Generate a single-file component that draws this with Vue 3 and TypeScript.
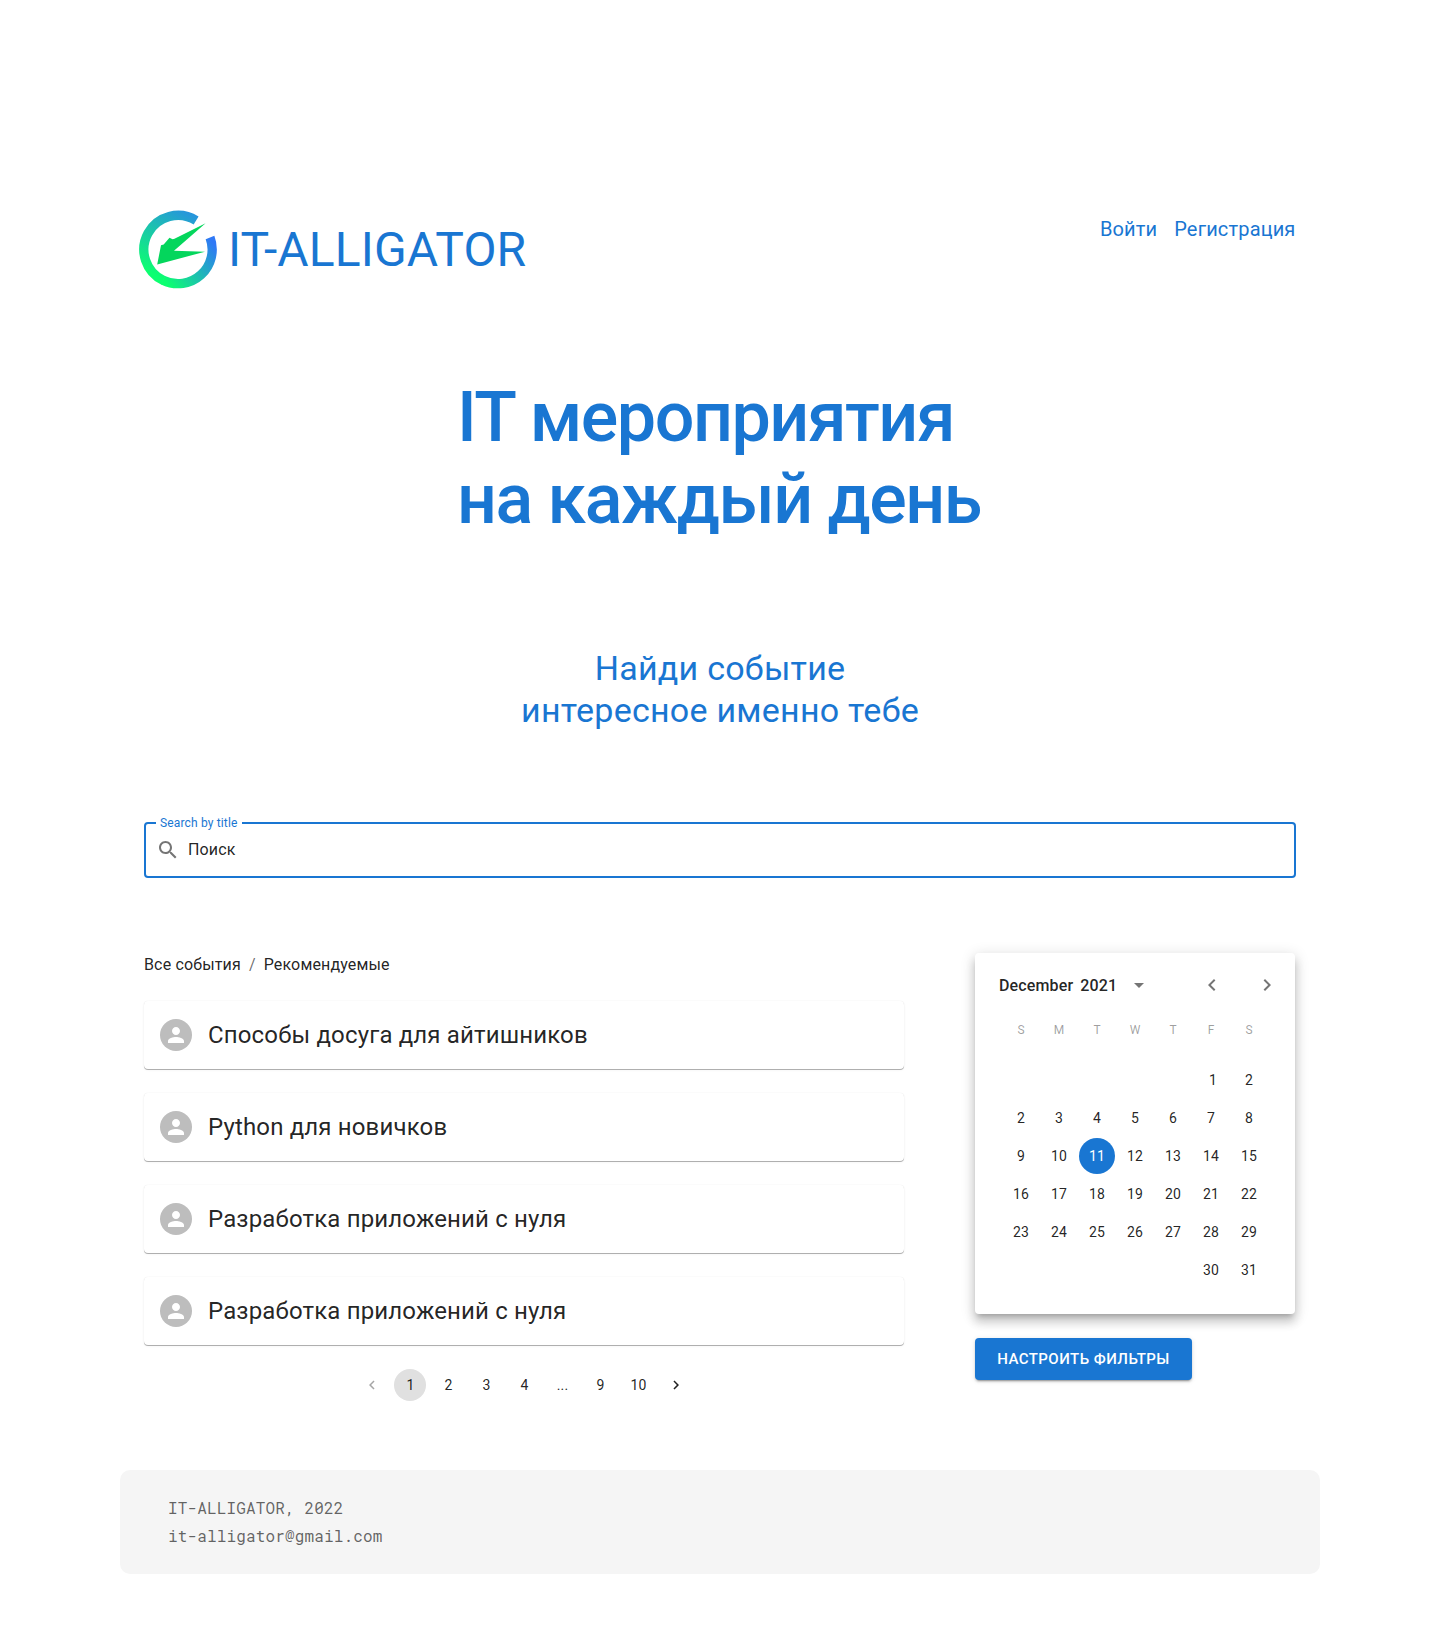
<script setup lang="ts">
const events: string[] = [
  'Способы досуга для айтишников',
  'Python для новичков',
  'Разработка приложений с нуля',
  'Разработка приложений с нуля',
]
const pages: string[] = ['1', '2', '3', '4', '...', '9', '10']
const weekdays: string[] = ['S', 'M', 'T', 'W', 'T', 'F', 'S']
const weeks: (number | null)[][] = [
  [null, null, null, null, null, 1, 2],
  [2, 3, 4, 5, 6, 7, 8],
  [9, 10, 11, 12, 13, 14, 15],
  [16, 17, 18, 19, 20, 21, 22],
  [23, 24, 25, 26, 27, 28, 29],
  [null, null, null, null, null, 30, 31],
]
const selectedDay = 11
const currentPage = '1'
</script>

<template>
  <div class="page">
    <header class="header">
      <a class="brand">
        <svg class="logo" width="80" height="80" viewBox="-40 -39.5 80 80">
          <defs>
            <linearGradient id="ring-left" gradientUnits="userSpaceOnUse" x1="-14" y1="31" x2="20" y2="-32">
              <stop offset="0" stop-color="#0cff70" />
              <stop offset="1" stop-color="#2795dc" />
            </linearGradient>
            <linearGradient id="ring-right" gradientUnits="userSpaceOnUse" x1="-14" y1="31" x2="34" y2="-8">
              <stop offset="0" stop-color="#0cff70" />
              <stop offset="1" stop-color="#2f78f6" />
            </linearGradient>
          </defs>
          <path d="M18.1-29A34.2 34.2 0 1 0-14.5 31" fill="none" stroke="url(#ring-left)" stroke-width="9.3" />
          <path d="M-15 30.75A34.2 34.2 0 0 0 32-12" fill="none" stroke="url(#ring-right)" stroke-width="9.3" />
          <path d="M27.6-26.2L-4 1.2 27 2.2-20.8 14.9-17-4.2-14.3-5-8.5-11.7-5.4-10.2-3.5-10.8Z" fill="#04d65c" />
        </svg>
        <span class="brand-name">IT-ALLIGATOR</span>
      </a>
      <nav class="nav"><a>Войти</a><a>Регистрация</a></nav>
    </header>

    <h1 class="title">IT мероприятия<br />на каждый день</h1>
    <p class="subtitle">Найди событие<br />интересное именно тебе</p>

    <div class="search">
      <span class="search-label">Search by title</span>
      <svg class="search-icon" width="24" height="24" viewBox="0 0 24 24">
        <path d="M15.5 14h-.79l-.28-.27C15.41 12.59 16 11.11 16 9.5 16 5.91 13.09 3 9.5 3S3 5.91 3 9.5 5.91 16 9.5 16c1.61 0 3.09-.59 4.23-1.57l.27.28v.79l5 4.99L20.49 19l-4.99-5zm-6 0C7.01 14 5 11.99 5 9.5S7.01 5 9.5 5 14 7.01 14 9.5 11.99 14 9.5 14z" />
      </svg>
      <span class="search-value">Поиск</span>
    </div>

    <main class="content">
      <section class="feed">
        <div class="crumbs"><a>Все события</a><span class="sep">/</span><a>Рекомендуемые</a></div>
        <div class="cards">
          <article v-for="(event, i) in events" :key="i" class="card">
            <span class="avatar">
              <svg width="24" height="24" viewBox="0 0 24 24">
                <path d="M12 12c2.21 0 4-1.79 4-4s-1.79-4-4-4-4 1.79-4 4 1.79 4 4 4zm0 2c-2.67 0-8 1.34-8 4v2h16v-2c0-2.66-5.33-4-8-4z" />
              </svg>
            </span>
            <span class="card-title">{{ event }}</span>
          </article>
        </div>
        <div class="pager">
          <span class="page-item disabled">
            <svg width="18" height="18" viewBox="0 0 24 24"><path d="M15.41 7.41L14 6l-6 6 6 6 1.41-1.41L10.83 12z" /></svg>
          </span>
          <span v-for="p in pages" :key="p" class="page-item number" :class="{ active: p === currentPage }">{{ p }}</span>
          <span class="page-item">
            <svg width="18" height="18" viewBox="0 0 24 24"><path d="M10 6L8.59 7.41 13.17 12l-4.58 4.59L10 18l6-6z" /></svg>
          </span>
        </div>
      </section>

      <aside class="side">
        <div class="calendar">
          <div class="cal-head">
            <span class="month">December</span>
            <span class="year">2021</span>
            <svg class="drop" width="24" height="24" viewBox="0 0 24 24"><path d="M7 10l5 5 5-5z" /></svg>
            <svg class="prev" width="24" height="24" viewBox="0 0 24 24"><path d="M15.41 7.41L14 6l-6 6 6 6 1.41-1.41L10.83 12z" /></svg>
            <svg class="next" width="24" height="24" viewBox="0 0 24 24"><path d="M10 6L8.59 7.41 13.17 12l-4.58 4.59L10 18l6-6z" /></svg>
          </div>
          <div class="weekdays"><span v-for="(d, i) in weekdays" :key="i">{{ d }}</span></div>
          <div class="days">
            <template v-for="(week, w) in weeks" :key="w">
              <span
                v-for="(day, d) in week"
                :key="d"
                class="day"
                :class="{ selected: day === selectedDay, first: day === 1 }"
              >{{ day ?? '' }}</span>
            </template>
          </div>
        </div>
        <button class="filters" type="button">Настроить фильтры</button>
      </aside>
    </main>

    <footer class="footer">
      <div>IT-ALLIGATOR, 2022</div>
      <div>it-alligator@gmail.com</div>
    </footer>
  </div>
</template>

<style>
body {
  margin: 0;
  background: #fff;
}
</style>

<style scoped>
.page {
  box-sizing: border-box;
  width: 1440px;
  height: 1640px;
  padding: 210px 120px 0;
  font-family: Roboto, "Liberation Sans", sans-serif;
  color: rgba(0, 0, 0, 0.87);
}
svg {
  display: block;
  fill: currentColor;
}
.header {
  display: flex;
  justify-content: space-between;
  align-items: flex-start;
  height: 80px;
  padding: 0 24.5px 0 18px;
  color: #1976d2;
}
.brand {
  display: flex;
  align-items: center;
}
.brand-name {
  margin-left: 10px;
  font-size: 48px;
  line-height: 56px;
  letter-spacing: 0.15px;
}
.nav {
  display: flex;
  gap: 17px;
  margin-top: 7px;
  font-size: 20px;
  line-height: 24px;
  letter-spacing: 0.15px;
}
.title {
  width: max-content;
  margin: 86px 0 0 337px;
  font-size: 70px;
  line-height: 82px;
  font-weight: 500;
  letter-spacing: -1.5px;
  color: #1976d2;
}
.subtitle {
  margin: 107px 0 0;
  text-align: center;
  font-size: 34px;
  line-height: 42px;
  letter-spacing: 0.25px;
  color: #1976d2;
}
.search {
  position: relative;
  box-sizing: border-box;
  display: flex;
  align-items: center;
  height: 56px;
  margin: 91px 24px 0;
  padding: 0 10px;
  border: 2px solid #1976d2;
  border-radius: 4px;
}
.search-label {
  position: absolute;
  left: 10px;
  top: -8px;
  padding: 0 5px 0 4px;
  background: #fff;
  font-size: 12px;
  line-height: 14px;
  letter-spacing: 0.15px;
  color: #1976d2;
}
.search-icon {
  color: #757575;
}
.search-value {
  margin-left: 8px;
  font-size: 16px;
  line-height: 24px;
  letter-spacing: 0.15px;
}
.content {
  display: flex;
  justify-content: space-between;
  padding: 0 25px 0 24px;
  margin-top: 75px;
}
.feed {
  width: 760px;
}
.crumbs {
  display: flex;
  font-size: 16px;
  line-height: 24px;
  letter-spacing: 0.15px;
}
.sep {
  margin: 0 8px;
  color: rgba(0, 0, 0, 0.6);
}
.cards {
  display: flex;
  flex-direction: column;
  gap: 24px;
  margin-top: 24px;
}
.card {
  box-sizing: border-box;
  display: flex;
  align-items: center;
  height: 68px;
  padding: 0 16px;
  border-radius: 4px;
  background: #fff;
  box-shadow: 0 1px 3px rgba(0, 0, 0, 0.06), 0 0 1px rgba(0, 0, 0, 0.1), 0 1px 0.5px rgba(0, 0, 0, 0.28);
}
.avatar {
  display: flex;
  align-items: center;
  justify-content: center;
  width: 32px;
  height: 32px;
  border-radius: 50%;
  background: #bdbdbd;
  color: #fff;
}
.card-title {
  margin-left: 16px;
  font-size: 24px;
  line-height: 32px;
  letter-spacing: 0.15px;
}
.pager {
  display: flex;
  gap: 6px;
  margin: 24px 0 0 212px;
}
.page-item {
  box-sizing: border-box;
  display: flex;
  align-items: center;
  justify-content: center;
  width: 32px;
  height: 32px;
  border-radius: 50%;
  font-size: 14px;
  letter-spacing: 0.15px;
}
.page-item.number {
  padding-left: 1px;
}
.page-item.active {
  background: #e0e0e0;
}
.page-item.disabled {
  color: rgba(0, 0, 0, 0.35);
}
.side {
  width: 320px;
}
.calendar {
  box-sizing: border-box;
  height: 361px;
  border-radius: 4px;
  background: #fff;
  box-shadow: 0 5px 5px -3px rgba(0, 0, 0, 0.2), 0 8px 10px 1px rgba(0, 0, 0, 0.14), 0 3px 14px 2px rgba(0, 0, 0, 0.12);
}
.cal-head {
  display: flex;
  align-items: center;
  height: 24px;
  padding: 20px 16px 0 24px;
  font-size: 16px;
  font-weight: 500;
  line-height: 26px;
  letter-spacing: 0.15px;
}
.cal-head svg {
  color: #757575;
}
.month,
.year {
  padding-top: 1px;
}
.year {
  margin-left: 7px;
}
.drop {
  margin-left: 10px;
}
.prev {
  margin-left: auto;
}
.next {
  margin-left: 31.5px;
}
.weekdays {
  display: grid;
  grid-template-columns: repeat(7, 38px);
  margin: 25px 0 0 27px;
  text-align: center;
  font-size: 12px;
  line-height: 16px;
  color: rgba(0, 0, 0, 0.38);
}
.days {
  display: grid;
  grid-template-columns: repeat(7, 36px);
  gap: 2px;
  margin: 24px 0 0 28px;
}
.day {
  box-sizing: border-box;
  height: 36px;
  border-radius: 50%;
  text-align: center;
  font-size: 14px;
  line-height: 36px;
  letter-spacing: 0.15px;
}
.day.first {
  padding-left: 4px;
}
.day.selected {
  background: #1976d2;
  color: #fff;
}
.filters {
  display: block;
  width: 217px;
  height: 42px;
  margin-top: 24px;
  padding: 0;
  border: 0;
  border-radius: 4px;
  background: #1976d2;
  color: #fff;
  font: 500 15px/26px Roboto, "Liberation Sans", sans-serif;
  letter-spacing: 0.46px;
  text-transform: uppercase;
  box-shadow: 0 1px 5px rgba(0, 0, 0, 0.12), 0 2px 2px rgba(0, 0, 0, 0.14), 0 3px 1px -2px rgba(0, 0, 0, 0.2);
}
.footer {
  box-sizing: border-box;
  height: 104px;
  margin-top: 68.5px;
  padding: 24.5px 48px 0;
  border-radius: 10px;
  background: #f5f5f5;
  font-family: "Roboto Mono", "DejaVu Sans Mono", monospace;
  font-size: 16px;
  line-height: 28px;
  letter-spacing: 0.15px;
  color: rgba(0, 0, 0, 0.6);
}
</style>
